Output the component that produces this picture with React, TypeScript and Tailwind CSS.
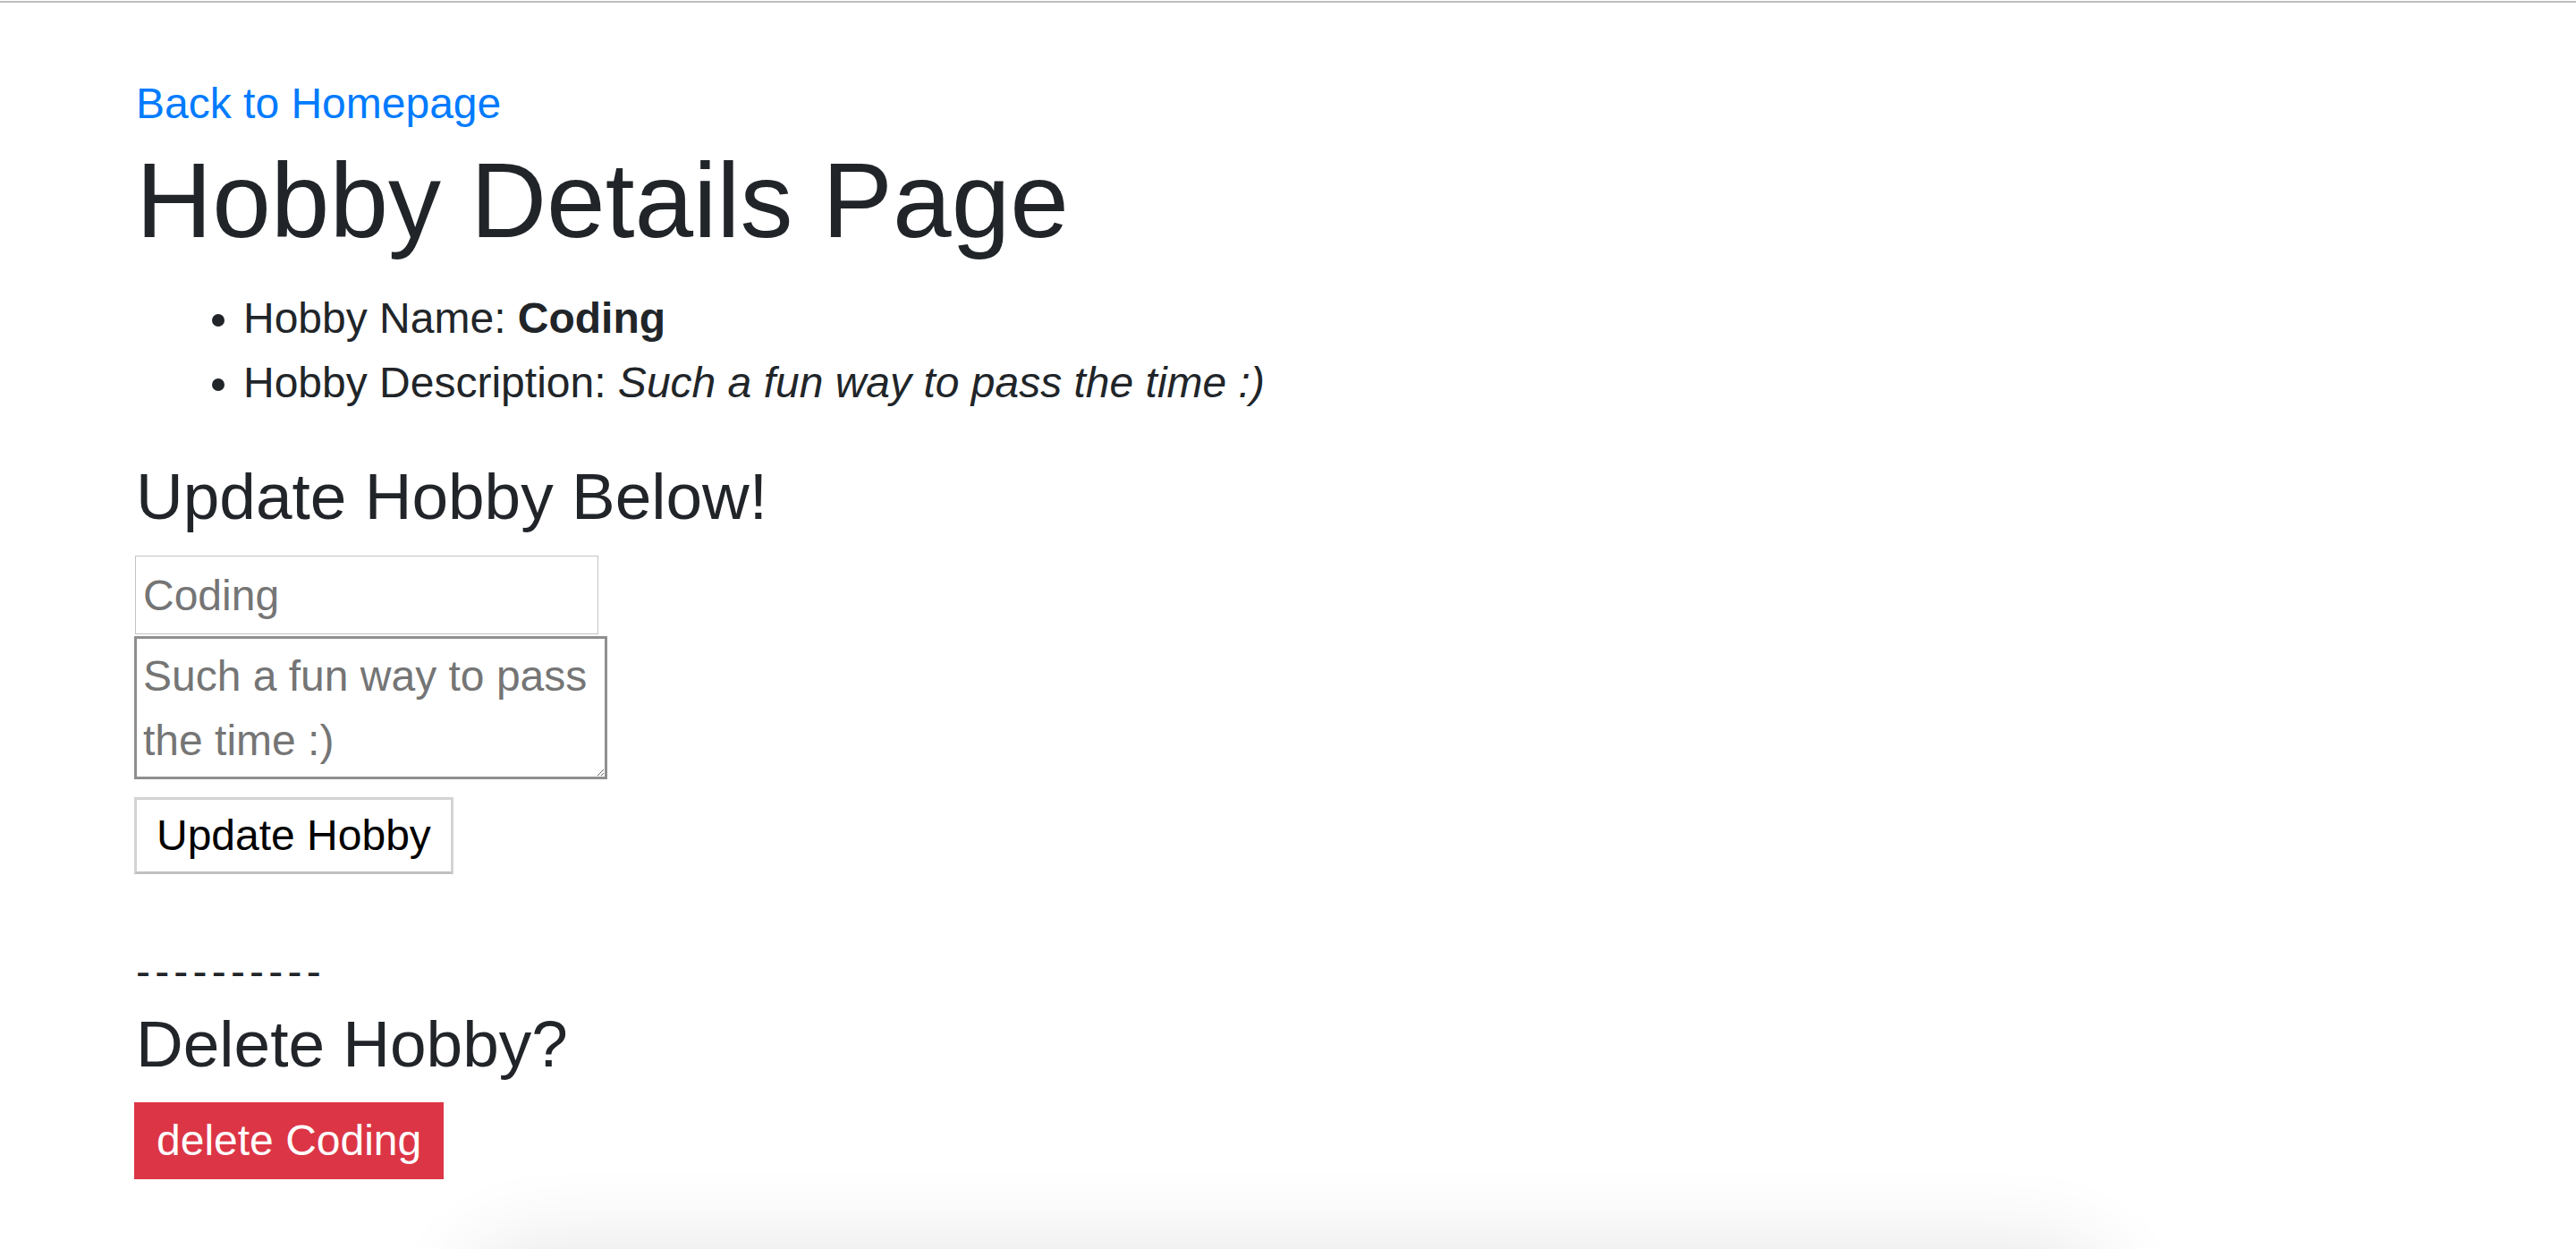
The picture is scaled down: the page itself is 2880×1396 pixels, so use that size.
import React from "react";

const HobbyDetails = () => {
    const hobby = {
        name: "Coding",
        description: "Such a fun way to pass the time :)",
    };

    return (
        <div className="relative h-[1396px] overflow-hidden bg-white font-['Liberation_Sans',Arial,sans-serif] text-[#212529]">
            <div className="mt-px h-[2px] bg-[#bdbdbd]" />

            <div className="pl-[152px] pt-[77px]">
                <a href="#" className="block w-fit text-[48px] leading-[72px] text-[#007bff]">
                    Back to Homepage
                </a>
                <h1 className="mb-[24px] text-[118px] leading-[144px] font-normal">Hobby Details Page</h1>

                <ul className="mb-[48px] list-disc pl-[120px] text-[48px] leading-[72px]">
                    <li>
                        Hobby Name: <b className="font-bold">{hobby.name}</b>
                    </li>
                    <li>
                        Hobby Description: <i className="italic">{hobby.description}</i>
                    </li>
                </ul>

                <h4 className="mb-[23px] text-[73px] leading-[86px] font-normal">Update Hobby Below!</h4>

                <form className="flex flex-col items-start" onSubmit={(e) => e.preventDefault()}>
                    <input
                        type="text"
                        placeholder={hobby.name}
                        className="-ml-px h-[88px] w-[518px] border border-[#c3c3c3] bg-white px-[8px] text-[48px] text-black outline-none placeholder:text-[#757575]"
                    />
                    <textarea
                        placeholder={hobby.description}
                        className="-ml-[2px] mt-[2px] h-[160px] w-[529px] resize border-[3px] border-[#8f8f8f] bg-white px-[7px] py-[6px] text-[48px] leading-[72px] text-black outline-none placeholder:text-[#757575]"
                    />
                    <button
                        type="submit"
                        className="-ml-[2px] mt-[20px] h-[86px] w-[357px] border-[3px] border-[#d3d3d3] border-b-[#c0c0c0] bg-white pl-[22px] text-left text-[48px] text-black"
                    >
                        Update Hobby
                    </button>
                </form>

                <div className="mt-[73px] text-[48px] leading-[72px] tracking-[5.2px]">----------</div>
                <h4 className="mt-[2px] mb-[22px] text-[73px] leading-[86px] font-normal">Delete Hobby?</h4>

                <button className="-ml-[2px] h-[86px] w-[346px] bg-[#dc3545] pl-[25px] text-left text-[48px] text-white">
                    delete {hobby.name}
                </button>
            </div>

            {/* shadow of something sitting just under the window edge */}
            <div className="absolute left-[540px] top-[1420px] h-[200px] w-[1800px] rounded-[60px] bg-white shadow-[0_0_90px_35px_rgba(0,0,0,0.09)]" />
        </div>
    );
};

export default function App() {
    return <HobbyDetails />;
}
